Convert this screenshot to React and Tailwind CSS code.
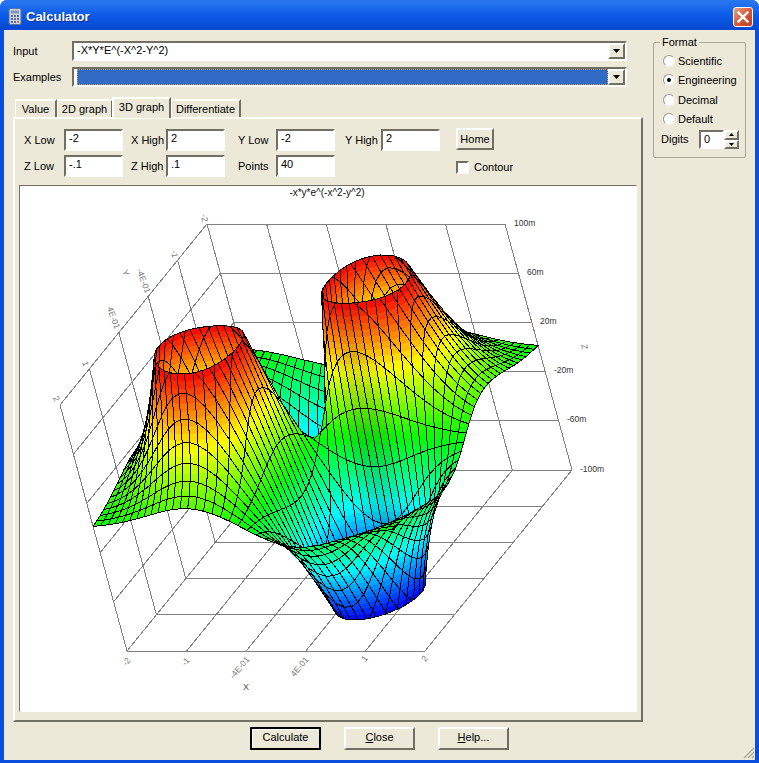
import React from 'react';

const font = { fontFamily: '"Liberation Sans", sans-serif' };

// --- 3D surface: same formula and range as the app, projected by the box edges
const N = 40;
const BANDS = 40;
const ZLO = -0.1;
const ZHI = 0.1;
const f = (x, y) => -x * y * Math.exp(-x * x - y * y);
const px = ([x, y, z]) => 274 + (298 * (x + 2)) / 4 - (147 * (y + 2)) / 4 - (67 * (z - ZLO)) / (ZHI - ZLO);
const py = ([, y, z]) => 470 + (181 * (y + 2)) / 4 - (246 * (z - ZLO)) / (ZHI - ZLO);

function clipAbove(poly, v, keepAbove) {
  const out = [];
  for (let i = 0; i < poly.length; i++) {
    const a = poly[i];
    const b = poly[(i + 1) % poly.length];
    const ain = keepAbove ? a[2] >= v : a[2] <= v;
    const bin = keepAbove ? b[2] >= v : b[2] <= v;
    if (ain) out.push(a);
    if (ain !== bin) {
      const t = (v - a[2]) / (b[2] - a[2]);
      out.push([a[0] + (b[0] - a[0]) * t, a[1] + (b[1] - a[1]) * t, v]);
    }
  }
  return out;
}
const clipBand = (poly, lo, hi) => clipAbove(clipAbove(poly, lo, true), hi, false);

function rainbow(t, shade) {
  const s = t * 4;
  let r = 0, g = 0, b = 0;
  if (s < 1) { g = s; b = 1; }
  else if (s < 2) { g = 1; b = 2 - s; }
  else if (s < 3) { r = s - 2; g = 1; }
  else { r = 1; g = 4 - s; }
  return `rgb(${Math.round(r * 255 * shade)},${Math.round(g * 255 * shade)},${Math.round(b * 255 * shade)})`;
}

const toPath = (poly) => 'M' + poly.map((p) => `${px(p).toFixed(1)} ${py(p).toFixed(1)}`).join('L') + 'Z';

function buildSurface() {
  const items = [];
  const at = (i, j) => {
    const x = -2 + (4 * i) / (N - 1);
    const y = -2 + (4 * j) / (N - 1);
    return [x, y, f(x, y)];
  };
  for (let j = 0; j < N - 1; j++) {
    for (let i = 0; i < N - 1; i++) {
      const quad = [at(i, j), at(i + 1, j), at(i + 1, j + 1), at(i, j + 1)];
      // slight dark spot where the wall faces the light straight on
      const h = 4 / (N - 1);
      const fx = (quad[1][2] + quad[2][2] - quad[0][2] - quad[3][2]) / (2 * h);
      const fy = (quad[2][2] + quad[3][2] - quad[0][2] - quad[1][2]) / (2 * h);
      const shade = 1 - 0.12 * Math.exp(-(((fy + 0.43) / 0.07) ** 2) - ((fx / 0.1) ** 2));
      const d = (ZHI - ZLO) / BANDS;
      for (let k = 0; k < BANDS; k++) {
        const part = clipBand(quad, ZLO + k * d, ZLO + (k + 1) * d);
        if (part.length >= 3) items.push({ d: toPath(part), fill: rainbow((k + 0.5) / BANDS, shade) });
      }
      const outline = clipBand(quad, ZLO, ZHI);
      if (outline.length >= 3) items.push({ d: toPath(outline), line: true });
    }
  }
  return items;
}
const surface = buildSurface();

function gridLines() {
  const lines = [];
  const A = [274, 470]; // back floor corner
  const X = [298, 0];
  const Y = [-147, 181];
  const Z = [-67, -246];
  const seg = (o, u, v, t) => [o[0] + u[0] * t, o[1] + u[1] * t, o[0] + u[0] * t + v[0], o[1] + u[1] * t + v[1]];
  for (let k = 0; k <= 5; k++) {
    const t = k / 5;
    lines.push(seg(A, X, Y, t), seg(A, Y, X, t));
    lines.push(seg(A, X, Z, t), seg(A, Z, X, t));
    lines.push(seg(A, Y, Z, t), seg(A, Z, Y, t));
  }
  return lines;
}

const xLabels = [['-2', 127, 662], ['-1', 186, 662], ['-4E-01', 240, 668], ['4E-01', 300, 667], ['1', 365, 659], ['2', 425, 659]];
const yLabels = [['-2', 204, 218, 80], ['-1', 174, 254, 80], ['-4E-01', 143, 281, 70], ['4E-01', 113, 318, 70], ['1', 85, 364, 70], ['2', 56, 399, 60]];
const zLabels = [['100m', 514, 224], ['60m', 527, 273], ['20m', 540, 322], ['-20m', 554, 371], ['-60m', 567, 420], ['-100m', 580, 470]];

function Plot() {
  return (
    <svg viewBox="20 186 616 525" className="block w-full h-full" shapeRendering="crispEdges">
      {gridLines().map((l, i) => (
        <line key={i} x1={l[0]} y1={l[1]} x2={l[2]} y2={l[3]} stroke="#808080" strokeWidth="1" />
      ))}
      {surface.map((s, i) =>
        s.line ? (
          <path key={i} d={s.d} fill="none" stroke="#000" strokeWidth="1" strokeLinejoin="round" />
        ) : (
          <path key={i} d={s.d} fill={s.fill} stroke={s.fill} strokeWidth="0.6" />
        )
      )}
      <g style={{ fontFamily: '"Liberation Sans", sans-serif' }} textAnchor="middle">
        <text x="327" y="196" fontSize="10" fill="#111">-x*y*e^(-x^2-y^2)</text>
        {xLabels.map(([t, x, y]) => (
          <text key={t} x={x} y={y} fontSize="8.5" fill="#777" transform={`rotate(-50 ${x} ${y})`} dominantBaseline="middle">{t}</text>
        ))}
        {yLabels.map(([t, x, y, r]) => (
          <text key={t} x={x} y={y} fontSize="8.5" fill="#777" transform={`rotate(${r} ${x} ${y})`} dominantBaseline="middle">{t}</text>
        ))}
        {zLabels.map(([t, x, y]) => (
          <text key={t} x={x} y={y} fontSize="8.5" fill="#333" textAnchor="start" dominantBaseline="middle">{t}</text>
        ))}
        <text x="246" y="688" fontSize="9" fill="#555" dominantBaseline="middle">X</text>
        <text x="125" y="273" fontSize="8.5" fill="#777" dominantBaseline="middle" transform="rotate(70 125 273)">Y</text>
        <text x="584" y="347" fontSize="8.5" fill="#777" dominantBaseline="middle" transform="rotate(80 584 347)">Z</text>
      </g>
    </svg>
  );
}

function CalcIcon() {
  return (
    <svg width="16" height="17" viewBox="0 0 16 17" className="shrink-0">
      <rect x="2" y="0.5" width="12" height="16" rx="1.5" fill="#c9d3e6" stroke="#5c6f96" />
      <rect x="4" y="2.5" width="8" height="3" fill="#7f93bd" />
      {[4, 7, 10].map((x) =>
        [7, 10, 13].map((y) => <rect key={`${x}${y}`} x={x} y={y} width="2" height="2" fill={y === 13 && x === 10 ? '#d8734f' : '#5c6f96'} />)
      )}
    </svg>
  );
}

function CloseButton() {
  return (
    <div className="w-[20px] h-[20px] rounded-[3px] border border-white bg-gradient-to-br from-[#e8a08a] via-[#d9593a] to-[#c03a1c] flex items-center justify-center">
      <svg width="12" height="12" viewBox="0 0 12 12">
        <path d="M1.5 1.5L10.5 10.5M10.5 1.5L1.5 10.5" stroke="#fff" strokeWidth="2.4" strokeLinecap="square" />
      </svg>
    </div>
  );
}

const sunken = 'border-2 border-t-[#716f64] border-l-[#716f64] border-b-white border-r-white';
const raised = 'border-2 border-t-white border-l-white border-b-[#716f64] border-r-[#716f64]';

function Combo({ value, selected }) {
  return (
    <div className={`${sunken} w-[555px] h-[20px] flex bg-white`}>
      <div className="flex-1 min-w-0 pl-[3px]">
        {selected ? (
          <div className="h-full bg-[#316ac5] border border-dotted border-[#c8a060]" />
        ) : (
          <span className="block leading-[15px]">{value}</span>
        )}
      </div>
      <div className={`${raised} w-[17px] bg-[#ece9d8] flex items-center justify-center`}>
        <svg width="7" height="4" viewBox="0 0 7 4"><path d="M0 0H7L3.5 4Z" fill="#000" /></svg>
      </div>
    </div>
  );
}

function Tab({ label, active, width }) {
  return active ? (
    <div style={{ width }} className="relative z-10 h-[21px] -ml-px border-t-2 border-l-2 border-r-2 border-t-white border-l-white border-r-[#716f64] bg-[#ece9d8] text-center leading-[16px]">
      {label}
    </div>
  ) : (
    <div style={{ width }} className="h-[19px] mt-[2px] border-t-2 border-r-2 border-l border-t-white border-l-white border-r-[#716f64] text-center leading-[16px]">
      {label}
    </div>
  );
}

function Field({ label, value, labelWidth, width = 'w-[59px]' }) {
  return (
    <div className="flex items-center">
      <span style={{ width: labelWidth }} className="shrink-0">{label}</span>
      <div className={`${sunken} ${width} h-[22px] bg-white pl-[3px] leading-[15px]`}>{value}</div>
    </div>
  );
}

function Radio({ label, checked }) {
  return (
    <div className="flex items-center h-[19.5px]">
      <div className="w-[12px] h-[12px] rounded-full bg-white border border-t-[#9a988c] border-l-[#9a988c] border-b-[#f4f2e8] border-r-[#f4f2e8] flex items-center justify-center mr-[3px]">
        {checked && <div className="w-[4px] h-[4px] rounded-full bg-black" />}
      </div>
      <span>{label}</span>
    </div>
  );
}

function Button({ children, isDefault }) {
  return (
    <div className={`w-[71px] h-[23px] pb-[2px] flex items-center justify-center bg-[#ece9d8] ${isDefault ? 'border-2 border-black shadow-[inset_1px_1px_0_#fff]' : raised}`}>
      {children}
    </div>
  );
}

export default function App() {
  return (
    <div style={font} className="relative w-[759px] h-[763px] flex flex-col overflow-hidden rounded-t-[7px] bg-[#0a4fdc] text-[11px] text-black">
      {/* Title bar */}
      <div className="h-[30px] shrink-0 flex items-center pt-[3px] pl-[7px] pr-[6px] bg-gradient-to-b from-[#2a78f0] via-[#0b5be8] to-[#0646d0]">
        <CalcIcon />
        <span className="ml-[3px] flex-1 text-[13px] font-bold text-white leading-none [text-shadow:1px_1px_0_#0a2f90]">Calculator</span>
        <CloseButton />
      </div>

      {/* Client area */}
      <div className="flex-1 mx-[4px] mb-[4px] bg-[#ece9d8] flex flex-col">
        <div className="flex-1 flex pt-[11px] pl-[9px]">
          <div className="w-[630px] shrink-0 flex flex-col">
            <div className="flex items-center">
              <span className="w-[59px]">Input</span>
              <Combo value="-X*Y*E^(-X^2-Y^2)" />
            </div>
            <div className="flex items-center mt-[6px]">
              <span className="w-[59px]">Examples</span>
              <Combo selected />
            </div>

            <div className="flex mt-[10px] pl-[2px]">
              <Tab label="Value" width="42px" />
              <Tab label="2D graph" width="56px" />
              <Tab label="3D graph" active width="59px" />
              <Tab label="Differentiate" width="70px" />
            </div>

            <div className="-mt-px h-[605px] flex flex-col border-t-2 border-l-2 border-r-2 border-b-2 border-t-white border-l-white border-r-[#716f64] border-b-[#716f64] px-[4px] pt-[10px]">
              <div className="flex gap-[5px] pl-[5px]">
                <div className="flex flex-col gap-[4px]">
                  <Field label="X Low" value="-2" labelWidth="40px" />
                  <Field label="Z Low" value="-.1" labelWidth="40px" />
                </div>
                <div className="flex flex-col gap-[4px] ml-[3px]">
                  <Field label="X High" value="2" labelWidth="35px" />
                  <Field label="Z High" value=".1" labelWidth="35px" />
                </div>
                <div className="flex flex-col gap-[4px] ml-[8px]">
                  <Field label="Y Low" value="-2" labelWidth="38px" />
                  <Field label="Points" value="40" labelWidth="38px" />
                </div>
                <div className="ml-[5px]">
                  <Field label="Y High" value="2" labelWidth="36px" />
                </div>
                <div className="flex flex-col ml-[11px]">
                  <div className={`${raised} w-[38px] h-[22px] flex items-center justify-center -mt-px`}>Home</div>
                  <div className="flex items-center mt-[9px]">
                    <div className={`${sunken} w-[13px] h-[13px] bg-white mr-[5px]`} />
                    <span>Contour</span>
                  </div>
                </div>
              </div>

              <div className="mt-[8px] h-[527px] w-[618px] bg-white border border-t-[#716f64] border-l-[#716f64] border-b-white border-r-white">
                <Plot />
              </div>
            </div>
          </div>

          {/* Format group */}
          <fieldset className="ml-[10px] w-[93px] h-[123px] -mt-[6px] border border-[#aca899] rounded-[2px] pl-[7px] pr-[4px]">
            <legend className="px-[2px] -ml-[1px] leading-[15px]">Format</legend>
            <div className="pl-[2px] mt-[1px]">
              <Radio label="Scientific" />
              <Radio label="Engineering" checked />
              <Radio label="Decimal" />
              <Radio label="Default" />
            </div>
            <div className="flex items-center mt-[1px]">
              <span className="w-[38px]">Digits</span>
              <div className={`${sunken} w-[25px] h-[19px] bg-white pl-[3px] leading-[15px]`}>0</div>
              <div className="flex flex-col w-[15px] h-[19px]">
                <div className={`${raised} flex-1 flex items-center justify-center`}>
                  <svg width="5" height="3" viewBox="0 0 5 3"><path d="M2.5 0L5 3H0Z" fill="#000" /></svg>
                </div>
                <div className={`${raised} flex-1 flex items-center justify-center`}>
                  <svg width="5" height="3" viewBox="0 0 5 3"><path d="M0 0H5L2.5 3Z" fill="#000" /></svg>
                </div>
              </div>
            </div>
          </fieldset>
        </div>

        {/* Buttons */}
        <div className="h-[38px] shrink-0 flex items-start justify-center gap-[23px] pt-[5px]">
          <Button isDefault>Calculate</Button>
          <Button><span><u>C</u>lose</span></Button>
          <Button><span><u>H</u>elp...</span></Button>
        </div>
      </div>

      {/* Resize grip */}
      <svg width="12" height="12" viewBox="0 0 12 12" className="absolute right-[4px] bottom-[4px]">
        <path d="M11 1L1 11M11 5L5 11M11 9L9 11" stroke="#aca899" strokeWidth="1.2" />
      </svg>
    </div>
  );
}
